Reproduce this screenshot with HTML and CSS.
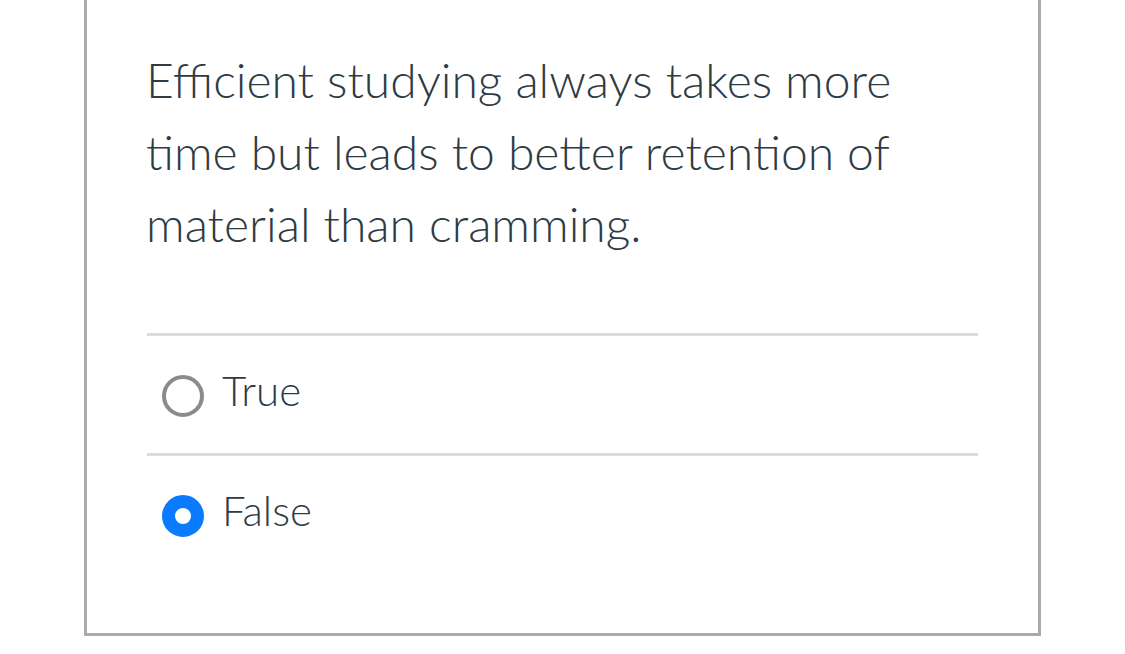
FILE: index.html
```html
<!DOCTYPE html>
<html lang="en">
<head>
<meta charset="utf-8">
<title>Quiz question</title>
<link rel="stylesheet" href="styles.css">
</head>
<body>
<div class="card">
  <p class="question">Efficient studying always takes more time but leads to better retention of material than cramming.</p>
  <div class="answers">
    <label class="answer">
      <span class="radio"></span>
      <span class="answer-text">True</span>
    </label>
    <label class="answer">
      <span class="radio radio-checked"></span>
      <span class="answer-text">False</span>
    </label>
  </div>
</div>
</body>
</html>
```
FILE: styles.css
```css
html, body {
  margin: 0;
  padding: 0;
  background: #ffffff;
}

body {
  font-family: Lato, "Open Sans", "Liberation Sans", sans-serif;
  color: #2d3b45;
}

.card {
  box-sizing: border-box;
  width: 957px;
  margin-left: 84px;
  border: 3px solid #aaaaaa;
  border-top: none;
  padding: 44px 60px 60px 60px;
}

.question {
  margin: 0 0 73px -1px;
  font-size: 48px;
  font-weight: 300;
  line-height: 72px;
}

.answers {
  display: flex;
  flex-direction: column;
}

.answer {
  display: flex;
  align-items: flex-start;
  gap: 18px;
  border-top: 3px solid #dcdcdc;
  padding: 18px 0 27px 15px;
}

.radio {
  box-sizing: border-box;
  flex: none;
  width: 42px;
  height: 42px;
  margin-top: 21px;
  border-radius: 50%;
  border: 4px solid #8b8b8e;
  background: #ffffff;
}

.radio-checked {
  border: 13px solid #0a7bff;
}

.answer-text {
  font-size: 42px;
  font-weight: 300;
  line-height: 72px;
}
```
